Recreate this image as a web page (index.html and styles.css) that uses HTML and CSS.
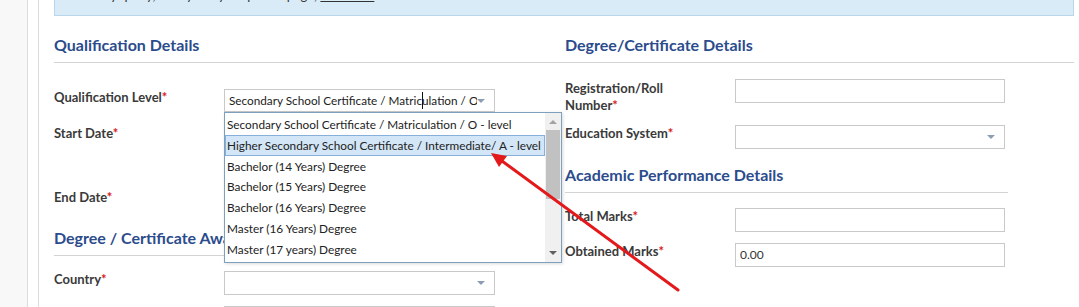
FILE: index.html
```html
<html lang="en">

<head>
	<meta charset="UTF-8">
	<title>Qualification</title>
	<link rel="stylesheet" href="styles.css">
</head>

<body>
	<div class="shell">
		<div class="panel">
			<div class="banner">
				<span class="banner-text">For any query, kindly see your profile page, <a href="#">click here</a></span>
			</div>
			<div class="cols">
				<div class="col">
					<div class="sec-title">Qualification Details</div>
					<div class="row row-q">
						<div class="label">Qualification Level<span class="req">*</span></div>
						<div class="ctrl">
							<div class="select">
								<span class="select-text">Secondary School Certificate / Matric<span class="ibeam"></span>ulation / O - level</span>
								<span class="caret"></span>
							</div>
							<div class="dropdown">
								<ul class="options">
									<li>Secondary School Certificate / Matriculation / O - level</li>
									<li class="active">Higher Secondary School Certificate / Intermediate/ A - level</li>
									<li>Bachelor (14 Years) Degree</li>
									<li>Bachelor (15 Years) Degree</li>
									<li>Bachelor (16 Years) Degree</li>
									<li>Master (16 Years) Degree</li>
									<li>Master (17 years) Degree</li>
								</ul>
								<div class="scrollbar">
									<span class="sb-up"></span>
									<span class="sb-thumb"></span>
									<span class="sb-down"></span>
								</div>
							</div>
						</div>
					</div>
					<div class="row row-start">
						<div class="label">Start Date<span class="req">*</span></div>
					</div>
					<div class="row row-end">
						<div class="label">End Date<span class="req">*</span></div>
					</div>
					<div class="sec-title sec-award">Degree / Certificate Awarding Body</div>
					<div class="row row-country">
						<div class="label">Country<span class="req">*</span></div>
						<div class="ctrl">
							<div class="select select-tall"><span class="caret"></span></div>
						</div>
					</div>
					<div class="row row-next">
						<div class="label"></div>
						<div class="ctrl">
							<div class="select select-tall"></div>
						</div>
					</div>
				</div>

				<div class="col col-right">
					<div class="sec-title sec-pad">Degree/Certificate Details</div>
					<div class="rform">
						<div class="row row-reg">
							<div class="label">Registration/Roll<br>Number<span class="req">*</span></div>
							<div class="ctrl"><div class="input"></div></div>
						</div>
						<div class="row row-edu">
							<div class="label">Education System<span class="req">*</span></div>
							<div class="ctrl">
								<div class="input"><span class="caret"></span></div>
							</div>
						</div>
						<div class="sec-title sec-acad">Academic Performance Details</div>
						<div class="row row-total">
							<div class="label">Total Marks<span class="req">*</span></div>
							<div class="ctrl"><div class="input"></div></div>
						</div>
						<div class="row row-obt">
							<div class="label">Obtained Marks<span class="req">*</span></div>
							<div class="ctrl"><div class="input">0.00</div></div>
						</div>
					</div>
				</div>
			</div>
		</div>
	</div>

	<svg class="pointer" width="1079" height="307" viewBox="0 0 1079 307">
		<line x1="678" y1="290" x2="502" y2="161" stroke="#e3191b" stroke-width="3" stroke-linecap="round" />
		<polygon points="491,153 507,156 499,167" fill="#e3191b" />
	</svg>
</body>

</html>
```

FILE: styles.css
```css
body {
	margin: 0;
	padding: 0;
	background: #f8f8f9;
	font-family: Lato, "Open Sans", sans-serif;
	color: #333;
	height: 307px;
	overflow: hidden;
	position: relative;
}

.shell {
	margin-left: 27px;
	border-left: 1px solid #dcdcdc;
	background: #fff;
	padding-left: 10px;
	height: 307px;
	overflow: hidden;
}

.panel {
	border-left: 1px solid #dcdcdc;
	padding-left: 15px;
	padding-right: 5px;
	height: 307px;
}

.banner {
	height: 15px;
	background: #d9ebf6;
	border: 1px solid #b9d6ea;
	border-top: 0;
	overflow: hidden;
	width: 1018px;
}

.banner-text {
	display: block;
	font-size: 13px;
	line-height: 16px;
	margin-top: -13px;
	padding-left: 20px;
	color: #333;
}

.banner-text a {
	color: #333;
}

.cols {
	display: grid;
	grid-template-columns: 486px 534px;
}

.sec-title {
	margin-top: 19px;
	font-size: 16px;
	font-weight: 700;
	line-height: 20px;
	color: #2b4c8c;
	padding-bottom: 7px;
	border-bottom: 1px solid #d3d3d3;
	white-space: nowrap;
	overflow: hidden;
}

.sec-pad {
	padding-left: 25px;
}

.sec-award {
	margin-top: 15px;
}

.sec-acad {
	margin-top: 16px;
}

.row {
	display: flex;
	align-items: flex-start;
}

.label {
	width: 170px;
	flex: none;
	font-size: 13px;
	font-weight: 700;
	line-height: 17px;
	color: #3a3a3a;
}

.req {
	color: #d81b1b;
}

.ctrl {
	width: 271px;
	position: relative;
}

.row-q {
	margin-top: 26px;
}

.row-start {
	margin-top: 13px;
	height: 64px;
}

.row-end {
	height: 24px;
}

.row-country {
	margin-top: 15px;
}

.row-next {
	margin-top: 11px;
}

.select {
	box-sizing: border-box;
	height: 23px;
	border: 1px solid #c9c9c9;
	background: #fff;
	position: relative;
	font-size: 11.75px;
	line-height: 21px;
	padding-left: 4px;
	padding-right: 17px;
	white-space: nowrap;
	overflow: hidden;
}

.select-tall {
	height: 24px;
}

.select-text {
	display: block;
	overflow: hidden;
	color: #222;
}

.ibeam {
	display: inline-block;
	width: 1px;
	height: 17px;
	background: #111;
	vertical-align: -4px;
	margin-right: -1px;
}

.caret {
	position: absolute;
	right: 9px;
	top: 50%;
	margin-top: -2px;
	width: 0;
	height: 0;
	border-left: 4px solid transparent;
	border-right: 4px solid transparent;
	border-top: 4px solid #8b9db3;
}

.dropdown {
	position: absolute;
	top: 23px;
	left: 0;
	width: 338px;
	height: 151px;
	box-sizing: border-box;
	border: 1px solid #7f9fbf;
	background: #fff;
	overflow: hidden;
	box-shadow: 1px 1px 3px rgba(0, 0, 0, 0.15);
	z-index: 2;
}

.options {
	list-style: none;
	margin: 0;
	padding: 1px 0 0 0;
	width: 320px;
}

.options li {
	box-sizing: border-box;
	height: 20.8px;
	line-height: 19px;
	font-size: 11.8px;
	padding-left: 1px;
	color: #222;
	white-space: nowrap;
	border: 1px solid transparent;
}

.options li.active {
	background: #d3e6f7;
	border-color: #86b0da;
}

.scrollbar {
	position: absolute;
	top: 0;
	right: 0;
	bottom: 0;
	width: 16px;
	background: #f0f0f0;
}

.sb-up,
.sb-down {
	position: absolute;
	left: 4px;
	width: 0;
	height: 0;
	border-left: 4px solid transparent;
	border-right: 4px solid transparent;
}

.sb-up {
	top: 7px;
	border-bottom: 4px solid #a3a3a3;
}

.sb-down {
	bottom: 7px;
	border-top: 4px solid #606060;
}

.sb-thumb {
	position: absolute;
	left: 1px;
	right: 1px;
	top: 17px;
	height: 69px;
	background: #c1c1c1;
}

.rform {
	padding-left: 25px;
	width: 443px;
}

.rform .ctrl {
	width: 270px;
}

.input {
	box-sizing: border-box;
	height: 24px;
	border: 1px solid #c9c9c9;
	background: #fff;
	position: relative;
	font-size: 12px;
	line-height: 22px;
	padding-left: 4px;
	color: #333;
}

.row-reg {
	margin-top: 16px;
}

.row-reg .label {
	padding-top: 1px;
}

.row-edu {
	margin-top: 11px;
}

.row-total {
	margin-top: 15px;
}

.row-obt {
	margin-top: 11px;
}

.pointer {
	position: absolute;
	top: 0;
	left: 0;
	pointer-events: none;
	z-index: 5;
}
```
